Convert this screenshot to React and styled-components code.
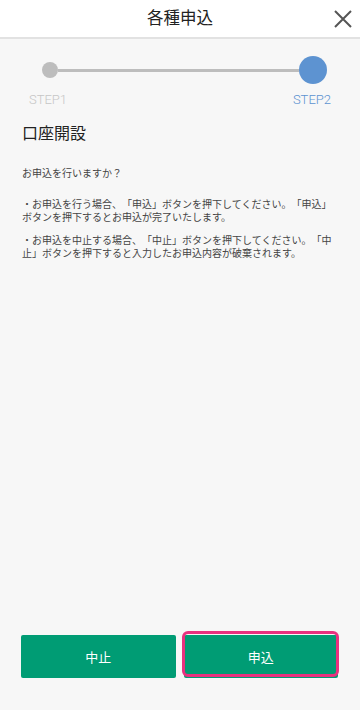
import React from 'react';
import styled, { createGlobalStyle } from 'styled-components';

const GlobalStyle = createGlobalStyle`
  html, body {
    margin: 0;
    padding: 0;
    background: #f7f7f7;
  }
  body {
    font-family: Roboto, 'Noto Sans CJK JP', sans-serif;
    color: #333;
    text-spacing-trim: space-all;
  }
`;

const Page = styled.div`
  min-height: 100vh;
  display: flex;
  flex-direction: column;
  background: #f7f7f7;
`;

const Header = styled.header`
  height: 37px;
  display: grid;
  grid-template-columns: 1fr auto 1fr;
  align-items: center;
  background: #fff;
  border-bottom: 2px solid #e2e2e2;
`;

const Title = styled.h1`
  grid-column: 2;
  margin: 0;
  font-size: 16.5px;
  font-weight: 400;
  color: #222;
  line-height: 20px;
  padding-top: 1px;
`;

const CloseButton = styled.button`
  grid-column: 3;
  justify-self: end;
  display: flex;
  align-items: center;
  justify-content: center;
  width: 24px;
  height: 24px;
  margin-right: 5px;
  padding: 0;
  border: none;
  background: transparent;
`;

const Stepper = styled.div`
  padding: 17px 0 0;
`;

const DotRow = styled.div`
  display: flex;
  align-items: center;
  height: 28px;
  padding: 0 33px 0 42px;
`;

const Dot = styled.span`
  flex: none;
  width: ${(p) => p.size}px;
  height: ${(p) => p.size}px;
  border-radius: 50%;
  background: ${(p) => (p.active ? '#5d93d1' : '#bdbdbd')};
`;

const Line = styled.span`
  flex: 1;
  height: 3px;
  background: #bdbdbd;
`;

const LabelRow = styled.div`
  display: flex;
  justify-content: space-between;
  margin-top: 8px;
  padding: 0 29px;
`;

const StepLabel = styled.span`
  font-size: 13px;
  line-height: 16px;
  font-weight: 300;
  color: ${(p) => (p.active ? '#5d93d1' : '#c6c6c6')};
`;

const Content = styled.section`
  padding: 16px 21px 0 22px;
`;

const Heading = styled.h2`
  margin: 0;
  font-size: 16px;
  line-height: 20px;
  font-weight: 400;
  color: #222;
`;

const Text = styled.p`
  margin: ${(p) => p.gap || 0}px 0 0;
  font-size: 10px;
  line-height: 13px;
  color: #444;
  text-spacing-trim: space-all;
`;

const Footer = styled.footer`
  margin-top: auto;
  display: flex;
  gap: 8px;
  padding: 0 22px 32px 21px;
`;

const ActionButton = styled.button`
  position: relative;
  flex: 1;
  height: 43px;
  border: none;
  border-radius: 2px;
  background: #009c74;
  color: #fff;
  font-family: Roboto, 'Noto Sans CJK JP', sans-serif;
  font-size: 13px;
  padding: 0;

  &::after {
    content: '';
    display: ${(p) => (p.focused ? 'block' : 'none')};
    position: absolute;
    top: -4px;
    left: -2px;
    right: -1px;
    bottom: 1px;
    border: 3px solid #e8317f;
    border-radius: 6px;
    pointer-events: none;
  }
`;

export default function App() {
  return (
    <Page>
      <GlobalStyle />
      <Header>
        <Title>各種申込</Title>
        <CloseButton aria-label="閉じる">
          <svg width="18" height="18" viewBox="0 0 18 18">
            <path d="M1 1 L17 17 M17 1 L1 17" stroke="#555" strokeWidth="2" fill="none" />
          </svg>
        </CloseButton>
      </Header>

      <Stepper>
        <DotRow>
          <Dot size={16} />
          <Line />
          <Dot size={28} active />
        </DotRow>
        <LabelRow>
          <StepLabel>STEP1</StepLabel>
          <StepLabel active>STEP2</StepLabel>
        </LabelRow>
      </Stepper>

      <Content>
        <Heading>口座開設</Heading>
        <Text gap={23}>お申込を行いますか？</Text>
        <Text gap={18}>
          ・お申込を行う場合、「申込」ボタンを押下してください。「申込」ボタンを押下するとお申込が完了いたします。
        </Text>
        <Text gap={10}>
          ・お申込を中止する場合、「中止」ボタンを押下してください。「中止」ボタンを押下すると入力したお申込内容が破棄されます。
        </Text>
      </Content>

      <Footer>
        <ActionButton>中止</ActionButton>
        <ActionButton focused>申込</ActionButton>
      </Footer>
    </Page>
  );
}
